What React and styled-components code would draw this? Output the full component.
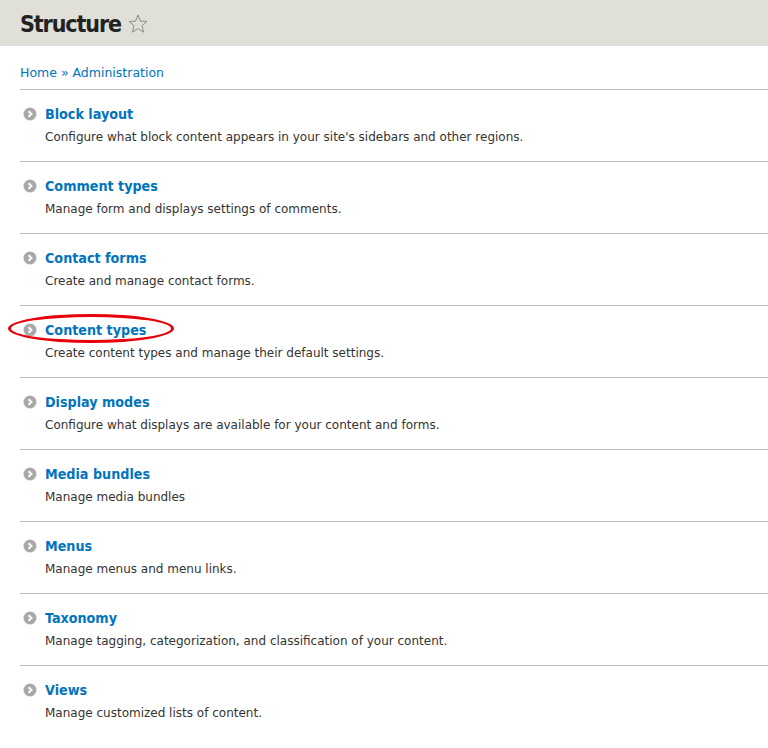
import React from "react";
import styled, { createGlobalStyle } from "styled-components";

const GlobalStyle = createGlobalStyle`
  body {
    margin: 0;
    background: #fff;
    font-family: "DejaVu Sans", "Lucida Grande", Verdana, sans-serif;
    color: #333;
  }
`;

const Header = styled.header`
  display: flex;
  align-items: center;
  gap: 7px;
  height: 46px;
  padding: 0 20px;
  background: #e0dfd8;
`;

const PageTitle = styled.h1`
  margin: 2px 0 0;
  font-family: "DejaVu Sans Condensed", "DejaVu Sans", sans-serif;
  font-size: 23px;
  font-weight: bold;
  color: #222;
  letter-spacing: -1.1px;
`;

const StarSvg = styled.svg`
  width: 20px;
  height: 20px;
  margin-top: 2px;
`;

const Content = styled.main`
  padding: 0 0 0 20px;
`;

const Breadcrumb = styled.nav`
  padding: 19px 0 8px;
  font-size: 12.5px;
  line-height: 16px;
  color: #0074bd;
  border-bottom: 1px solid #bfbfbf;
  a {
    color: #0074bd;
    text-decoration: none;
  }
`;

const List = styled.ul`
  margin: 0;
  padding: 0;
  list-style: none;
`;

const Item = styled.li`
  height: 72px;
  padding: 15px 0 0;
  box-sizing: border-box;
  border-bottom: 1px solid #bfbfbf;
  &:last-child {
    border-bottom: none;
  }
`;

const TitleRow = styled.div`
  position: relative;
  display: flex;
  align-items: center;
  gap: 8px;
  margin-left: 3px;
`;

const Icon = styled.svg`
  width: 14px;
  height: 14px;
  flex: none;
`;

const ItemLink = styled.a`
  font-family: "DejaVu Sans Condensed", "DejaVu Sans", sans-serif;
  font-size: 14.2px;
  font-weight: bold;
  line-height: 18px;
  color: #0074bd;
`;

const Mark = styled.span`
  position: absolute;
  left: -15px;
  top: -7px;
  width: 166px;
  height: 29px;
  border: 3px solid #e8000b;
  border-radius: 50%;
  box-sizing: border-box;
`;

const Description = styled.p`
  margin: 6px 0 0 25px;
  font-size: 12px;
  line-height: 16px;
`;

const items = [
  { title: "Block layout", text: "Configure what block content appears in your site's sidebars and other regions." },
  { title: "Comment types", text: "Manage form and displays settings of comments." },
  { title: "Contact forms", text: "Create and manage contact forms." },
  { title: "Content types", text: "Create content types and manage their default settings.", marked: true },
  { title: "Display modes", text: "Configure what displays are available for your content and forms." },
  { title: "Media bundles", text: "Manage media bundles" },
  { title: "Menus", text: "Manage menus and menu links." },
  { title: "Taxonomy", text: "Manage tagging, categorization, and classification of your content." },
  { title: "Views", text: "Manage customized lists of content." },
];

const Arrow = () => (
  <Icon viewBox="0 0 14 14">
    <circle cx="7" cy="7" r="6.5" fill="#a8a8a8" />
    <path d="M5.6 4.2 L8.4 7 L5.6 9.8" fill="none" stroke="#fff" strokeWidth="2" />
  </Icon>
);

const StarIcon = () => (
  <StarSvg viewBox="0 0 20 20">
    <path
      d="M10 1 L12.5 7.1 L19 7.5 L14 11.6 L15.6 18.2 L10 14.6 L4.4 18.2 L6 11.6 L1 7.5 L7.5 7.1 Z"
      fill="none"
      stroke="#8e8e86"
      strokeWidth="1"
      strokeLinejoin="round"
    />
  </StarSvg>
);

const App = () => {
  return (
    <>
      <GlobalStyle />
      <Header>
        <PageTitle>Structure</PageTitle>
        <StarIcon />
      </Header>
      <Content>
        <Breadcrumb>
          <a>Home</a> » <a>Administration</a>
        </Breadcrumb>
        <List>
          {items.map((item) => (
            <Item key={item.title}>
              <TitleRow>
                {item.marked && <Mark />}
                <Arrow />
                <ItemLink>{item.title}</ItemLink>
              </TitleRow>
              <Description>{item.text}</Description>
            </Item>
          ))}
        </List>
      </Content>
    </>
  );
};

export default App;
